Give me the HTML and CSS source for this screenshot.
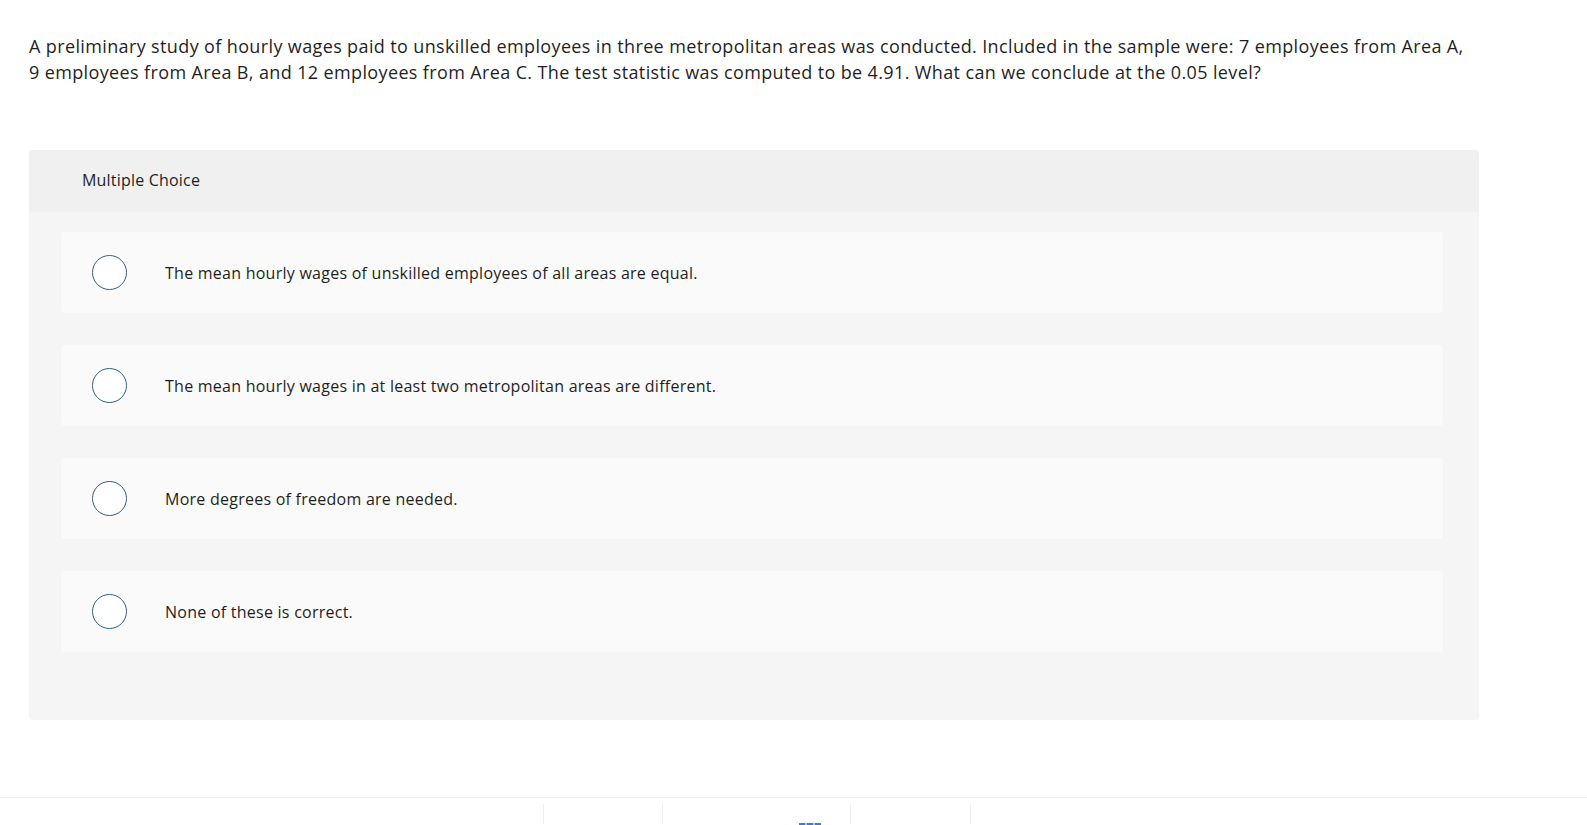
FILE: index.html
```html
<!DOCTYPE html>
<html lang="en">
<head>
<meta charset="utf-8">
<title>Multiple Choice</title>
<link rel="stylesheet" href="styles.css">
</head>
<body>
<main class="page">
  <p class="question">A preliminary study of hourly wages paid to unskilled employees in three metropolitan areas was conducted. Included in the sample were: 7 employees from Area A, 9 employees from Area B, and 12 employees from Area C. The test statistic was computed to be 4.91. What can we conclude at the 0.05 level?</p>
  <section class="panel">
    <header class="panel-head">Multiple Choice</header>
    <div class="options">
      <label class="option"><span class="radio"></span><span class="option-text">The mean hourly wages of unskilled employees of all areas are equal.</span></label>
      <label class="option"><span class="radio"></span><span class="option-text">The mean hourly wages in at least two metropolitan areas are different.</span></label>
      <label class="option"><span class="radio"></span><span class="option-text">More degrees of freedom are needed.</span></label>
      <label class="option"><span class="radio"></span><span class="option-text">None of these is correct.</span></label>
    </div>
  </section>
</main>
<footer class="footer">
  <div class="footer-cell c1"></div>
  <div class="footer-cell c2"></div>
  <div class="footer-cell c3"><span class="dash"></span></div>
  <div class="footer-cell c4"></div>
</footer>
</body>
</html>
```
FILE: styles.css
```css
html, body {
  margin: 0;
  padding: 0;
  background: #ffffff;
  overflow: hidden;
}
body {
  font-family: "Open Sans", "Lato", sans-serif;
  color: #1f1f1f;
  width: 1587px;
  height: 825px;
}
.page {
  padding: 0 29px;
}
.question {
  margin: 0;
  padding-top: 34px;
  font-size: 18px;
  line-height: 25.5px;
  letter-spacing: 0.37px;
  max-width: 1445px;
}
.panel {
  margin-top: 65px;
  width: 1450px;
  background: #f5f5f5;
  border-radius: 4px;
  overflow: hidden;
}
.panel-head {
  height: 62px;
  background: #f0f0f0;
  padding-left: 53px;
  padding-bottom: 2px;
  display: flex;
  align-items: center;
  font-size: 16px;
  letter-spacing: 0.2px;
  box-sizing: border-box;
}
.options {
  display: flex;
  flex-direction: column;
  gap: 32px;
  padding: 20px 36px 68px 32px;
}
.option {
  height: 81px;
  background: #fafafa;
  border-radius: 4px;
  display: flex;
  align-items: center;
  padding-left: 31px;
  box-sizing: border-box;
}
.radio {
  width: 35px;
  height: 35px;
  box-sizing: border-box;
  border: 1.5px solid #2f5f8c;
  border-radius: 50%;
  background: #ffffff;
  flex: none;
}
.option-text {
  margin-left: 38px;
  font-size: 16px;
  letter-spacing: 0.25px;
}
.footer {
  margin-top: 77px;
  border-top: 1px solid #eeeeee;
  height: 27px;
  display: flex;
  padding-top: 6px;
  box-sizing: border-box;
}
.footer-cell {
  border-left: 1px solid #eeeeee;
  height: 100%;
}
.c1 { margin-left: 543px; width: 118px; }
.c2 { width: 187px; }
.c3 { width: 119px; position: relative; }
.c4 { width: 10px; }
.dash {
  position: absolute;
  top: 19px;
  left: -52px;
  width: 22px;
  height: 2px;
  background: repeating-linear-gradient(90deg, #3a7bd5 0 6px, #a9c6ee 6px 8px);
}
```
